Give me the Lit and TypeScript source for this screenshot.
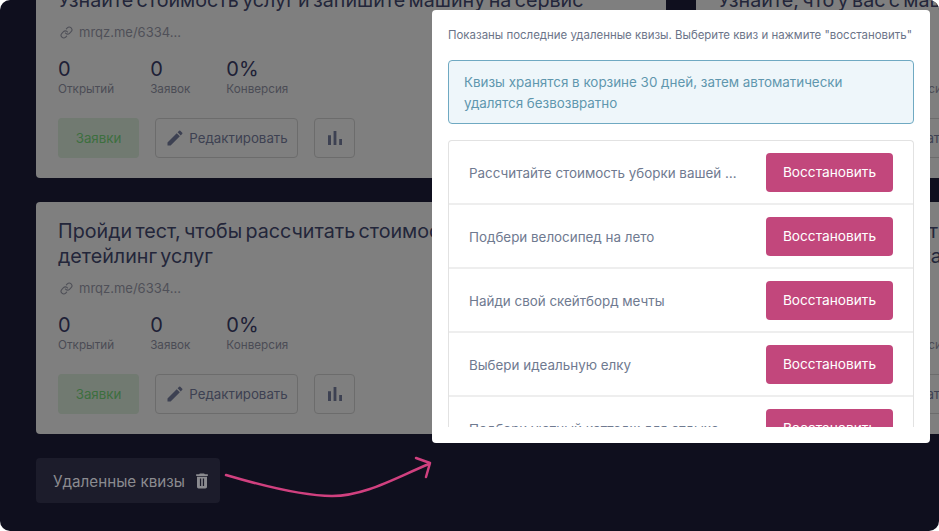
import { LitElement, html, css, svg } from 'lit';
import { customElement } from 'lit/decorators.js';

const pencilIcon = svg`<path d="M3 17.25V21h3.75L17.81 9.94l-3.75-3.75L3 17.25zM20.71 7.04a1 1 0 0 0 0-1.41l-2.34-2.34a1 1 0 0 0-1.41 0l-1.83 1.83 3.75 3.75 1.83-1.83z"/>`;
const chartIcon = svg`<path d="M5 9.2h3V19H5zM10.6 5h2.8v14h-2.8zM16.2 13H19v6h-2.8z"/>`;
const trashIcon = svg`<path fill-rule="evenodd" d="M6 19c0 1.1.9 2 2 2h8c1.1 0 2-.9 2-2V7H6v12zM9.5 9H11v9H9.5zM13 9h1.5v9H13z"/><path d="M19 4h-3.5l-1-1h-5l-1 1H5v2h14V4z"/>`;

const cards = [
  ['Рассчитайте стоимость ремонта автомобиля', 'Узнайте стоимость услуг и запишите машину на сервис'],
  ['Рассчитайте стоимость ремонта автомобиля', 'Узнайте, что у вас с машиной и сколько стоит ремонт'],
  ['Пройди тест, чтобы рассчитать стоимость и сроки оказания', 'детейлинг услуг'],
  ['Пройди тест за 2 минуты', 'узнайте цены услуг и качество'],
];

const deleted = [
  'Рассчитайте стоимость уборки вашей квартиры',
  'Подбери велосипед на лето',
  'Найди свой скейтборд мечты',
  'Выбери идеальную елку',
  'Подбери уютный коттедж для отдыха в горах этим летом',
];

@customElement('app-root')
export class AppRoot extends LitElement {
  static styles = css`
    :host {
      display: block;
      background: #fff;
      font-family: Inter, 'Liberation Sans', sans-serif;
    }

    .stage {
      position: relative;
      height: 531px;
      overflow: hidden;
      border-radius: 10px;
      background: #0f0f1e;
      padding-left: 36px;
    }

    .grid {
      display: grid;
      grid-template-columns: 630px 630px;
      gap: 24px 30px;
      margin-top: -54px;
    }

    .card {
      height: 232px;
      box-sizing: border-box;
      padding: 17px 22px 20px;
      background: #7f7f7f;
      border-radius: 4px;
      display: flex;
      flex-direction: column;
      white-space: nowrap;
    }

    .title {
      font-size: 19.7px;
      word-spacing: -2.2px;
      line-height: 24.5px;
      color: #23263a;
    }

    .link {
      display: flex;
      align-items: center;
      gap: 6px;
      margin-top: 10px;
      height: 20px;
      padding-left: 2px;
      font-size: 13px;
      color: #4f5058;
    }

    .link svg {
      width: 13px;
      height: 13px;
      fill: none;
      stroke: #4f5058;
      stroke-width: 2;
    }

    .stats {
      display: flex;
      gap: 36px;
      margin-top: 15px;
    }

    .num {
      font-size: 20px;
      line-height: 24px;
      color: #1d2036;
    }

    .label {
      font-size: 11.7px;
      line-height: 16px;
      color: #4b4c55;
    }

    .actions {
      display: flex;
      gap: 16px;
      margin-top: auto;
    }

    .btn {
      display: flex;
      align-items: center;
      justify-content: center;
      box-sizing: border-box;
      height: 40px;
      border-radius: 4px;
      font-size: 13.3px;
      color: #3d4152;
      border: 1px solid #6c6c6c;
    }

    .btn svg {
      fill: #3d4152;
    }

    .leads {
      width: 81px;
      border: none;
      background: #717a71;
      color: #3d6f3f;
    }

    .edit {
      width: 143px;
      gap: 4px;
    }

    .edit svg {
      width: 20px;
      height: 20px;
    }

    .stat-btn {
      width: 41px;
    }

    .stat-btn svg {
      width: 24px;
      height: 24px;
    }

    .trash {
      display: inline-flex;
      align-items: center;
      gap: 7px;
      height: 45px;
      margin-top: 24px;
      padding: 1px 8px 0 17px;
      box-sizing: border-box;
      border-radius: 4px;
      background: #1c1c2b;
      color: #8b8b90;
      font-size: 15.2px;
    }

    .trash svg {
      width: 20px;
      height: 20px;
      fill: #8b8b90;
    }

    .arrow {
      position: absolute;
      left: 220px;
      top: 450px;
      width: 220px;
      height: 55px;
      fill: none;
      stroke: #d0407f;
      stroke-width: 2.5;
      stroke-linecap: round;
      stroke-linejoin: round;
    }

    .modal {
      position: absolute;
      left: 432px;
      top: 10px;
      width: 498px;
      height: 433px;
      box-sizing: border-box;
      padding: 16px;
      background: #fff;
      border-radius: 4px;
      display: flex;
      flex-direction: column;
    }

    .intro {
      font-size: 11.45px;
      line-height: 18px;
      color: #6b7489;
      white-space: nowrap;
    }

    .alert {
      margin-top: 16px;
      padding: 11px 15px 9px;
      border: 1px solid #6fa9c2;
      border-radius: 4px;
      background: #eef6fa;
      color: #5f97ae;
      font-size: 13.4px;
      line-height: 21px;
    }

    .list {
      flex: 1;
      min-height: 0;
      margin-top: 16px;
      overflow: hidden;
      border: 1px solid #e2e2e2;
      border-bottom: none;
      border-radius: 4px 4px 0 0;
    }

    .row {
      display: flex;
      align-items: center;
      justify-content: space-between;
      box-sizing: border-box;
      height: 64px;
      padding: 0 20px;
      border-bottom: 2px solid #eeeeee;
    }

    .row span {
      width: 271px;
      overflow: hidden;
      white-space: nowrap;
      text-overflow: ellipsis;
      font-size: 13.4px;
      line-height: 18px;
      padding-top: 1px;
      color: #6f7a90;
    }

    .restore {
      width: 127px;
      height: 39px;
      display: flex;
      align-items: center;
      justify-content: center;
      border-radius: 4px;
      background: #c2477c;
      color: #fff;
      font-size: 13.7px;
    }
  `;

  private renderCard(lines: string[]) {
    return html`
      <div class="card">
        <div class="title">${lines[0]}<br />${lines[1]}</div>
        <div class="link">
          <svg viewBox="0 0 24 24" stroke-linecap="round" stroke-linejoin="round">
            <path d="M10 13a5 5 0 0 0 7.54.54l3-3a5 5 0 0 0-7.07-7.07l-1.72 1.71" />
            <path d="M14 11a5 5 0 0 0-7.54-.54l-3 3a5 5 0 0 0 7.07 7.07l1.71-1.71" />
          </svg>
          mrqz.me/6334...
        </div>
        <div class="stats">
          <div><div class="num">0</div><div class="label">Открытий</div></div>
          <div><div class="num">0</div><div class="label">Заявок</div></div>
          <div><div class="num">0%</div><div class="label">Конверсия</div></div>
        </div>
        <div class="actions">
          <div class="btn leads">Заявки</div>
          <div class="btn edit"><svg viewBox="0 0 24 24">${pencilIcon}</svg>Редактировать</div>
          <div class="btn stat-btn"><svg viewBox="0 0 24 24">${chartIcon}</svg></div>
        </div>
      </div>
    `;
  }

  render() {
    return html`
      <div class="stage">
        <div class="grid">${cards.map((c) => this.renderCard(c))}</div>
        <div class="trash">Удаленные квизы<svg viewBox="0 0 24 24">${trashIcon}</svg></div>
        <svg class="arrow" viewBox="0 0 220 55">
          <path d="M6 25C50 38 85 46 112 46C145 46 175 28 209 14" />
          <path d="M196 8L210 13L206 27" />
        </svg>
        <div class="modal">
          <div class="intro">Показаны последние удаленные квизы. Выберите квиз и нажмите "восстановить"</div>
          <div class="alert">Квизы хранятся в корзине 30 дней, затем автоматически удалятся безвозвратно</div>
          <div class="list">
            ${deleted.map(
              (name) => html`
                <div class="row">
                  <span>${name}</span>
                  <div class="restore">Восстановить</div>
                </div>
              `
            )}
          </div>
        </div>
      </div>
    `;
  }
}
